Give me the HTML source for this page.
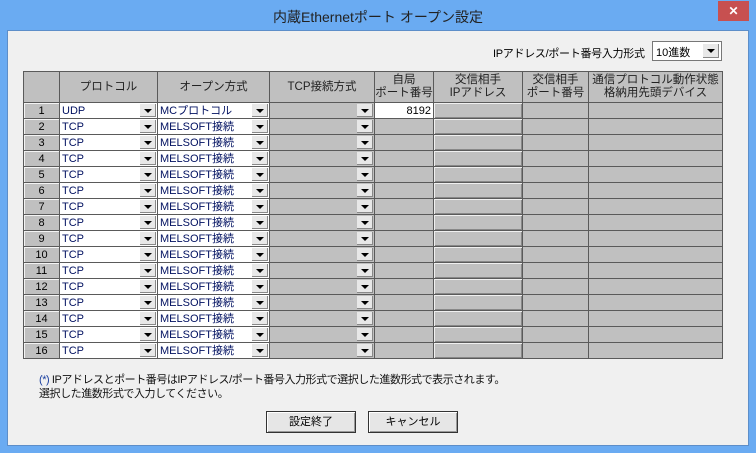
<!DOCTYPE html><html><head><meta charset="utf-8"><style>
*{margin:0;padding:0;box-sizing:border-box}
body{width:756px;height:453px;background:#6aabf2;font-family:"Liberation Sans","Noto Sans CJK JP",sans-serif;font-size:12px;position:relative;overflow:hidden}
.title{position:absolute;top:7px;left:0;width:756px;text-align:center;font-size:14px;color:#222}
.close{position:absolute;left:718px;top:1px;width:31px;height:20px;background:#c75050;color:#fff;text-align:center;font-size:12px;font-weight:bold;line-height:20px}
.client{position:absolute;left:7px;top:30px;width:742px;height:416px;background:#f0f0f0;border:1px solid #5d8ec9}
.a{position:absolute}
table{position:absolute;left:23px;top:71px;width:699px;border-collapse:collapse;table-layout:fixed}
td{border:1px solid #5a5a5a;height:16px;padding:0;background:#c0c0c0;font-size:11px;line-height:14px;position:relative;white-space:nowrap;overflow:hidden}
tr.h td{height:31px;text-align:center;color:#222;font-size:11.5px;line-height:13px}
td.n{text-align:center;box-shadow:inset 1px 1px #f4f4f4}
td.w{background:#fff;color:#001060;padding-left:2px}
.btn{position:absolute;right:1px;top:1px;width:16px;height:13px;background:#e8e8e8;border-right:1px solid #888;border-bottom:1px solid #888}
.btn:after{content:"";position:absolute;left:4px;top:5px;border-left:4px solid transparent;border-right:4px solid transparent;border-top:4px solid #000}
td.ip{box-shadow:inset 1px 1px #f0f0f0,inset -1px -1px #888}
.pb{position:absolute;height:22px;background:#e6e6e6;border:1px solid #333;text-align:center;line-height:20px;font-size:11px;box-shadow:inset 1px 1px #fff,inset -1px -1px #999}
</style></head><body>
<div class="title">内蔵Ethernetポート オープン設定</div>
<div class="close">✕</div>
<div class="client"></div>
<div class="a" style="left:493px;top:45px;font-size:11px;letter-spacing:-0.3px">IPアドレス/ポート番号入力形式</div>
<div class="a" style="left:652px;top:41px;width:70px;height:20px;background:#fff;border:1px solid #777;padding:2px 3px;font-size:11px">10進数<div class="btn" style="top:2px;right:2px;height:14px"></div></div>
<table id="t">
<colgroup><col style="width:36px"><col style="width:98px"><col style="width:112px"><col style="width:105px"><col style="width:59px"><col style="width:89px"><col style="width:66px"><col style="width:134px"></colgroup>
<tr class="h"><td></td><td>プロトコル</td><td>オープン方式</td><td>TCP接続方式</td><td>自局<br>ポート番号</td><td>交信相手<br>IPアドレス</td><td>交信相手<br>ポート番号</td><td>通信プロトコル動作状態<br>格納用先頭デバイス</td></tr>
</table>
<div class="a" style="left:39px;top:373px;font-size:11px;line-height:14px;color:#111;letter-spacing:-0.45px"><span style="color:#1a3fa0">(*)</span> IPアドレスとポート番号はIPアドレス/ポート番号入力形式で選択した進数形式で表示されます。<br>選択した進数形式で入力してください。</div>
<div class="pb" style="left:266px;top:411px;width:90px">設定終了</div>
<div class="pb" style="left:368px;top:411px;width:90px">キャンセル</div>
<script>
var t=document.getElementById('t'),h='';
for(var i=1;i<=16;i++){
h+='<tr><td class="n">'+i+'</td><td class="w">'+(i==1?'UDP':'TCP')+'<div class="btn"></div></td><td class="w">'+(i==1?'MCプロトコル':'MELSOFT接続')+'<div class="btn"></div></td><td><div class="btn"></div></td>'+(i==1?'<td class="w" style="text-align:right;padding-right:2px;color:#000">8192</td>':'<td></td>')+'<td class="ip"></td><td></td><td></td></tr>';
}
t.insertAdjacentHTML('beforeend',h);
</script>
</body></html>
